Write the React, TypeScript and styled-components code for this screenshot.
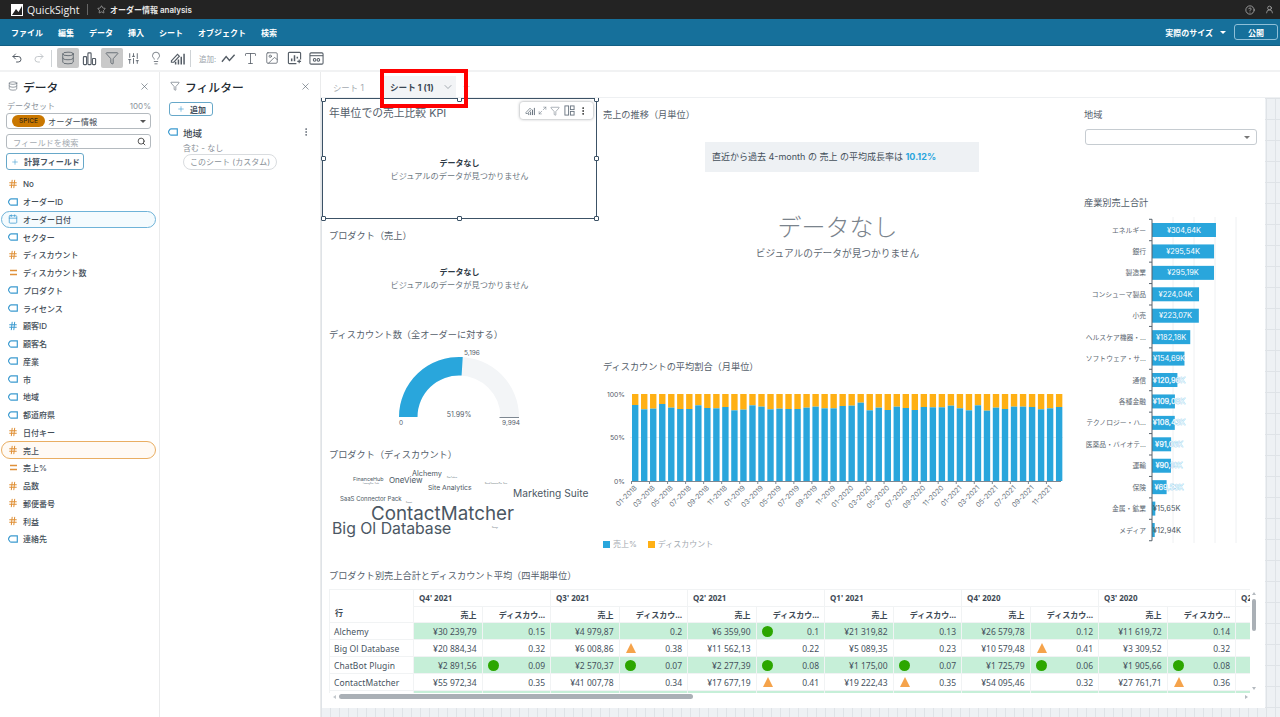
import React from "react";
import styled, { createGlobalStyle } from "styled-components";
import { Undo2, Redo2, Database, Filter, SlidersVertical, Lightbulb, Type, Image, X, Search, Star, CircleHelp, UserRound, ChevronDown, Maximize2, MoreVertical, Plus, Hash, Calendar } from "lucide-react";

const FONT = `Inter, "Noto Sans CJK JP", sans-serif`;
const TABLE_FONT = `"Noto Sans", "Noto Sans CJK JP", sans-serif`;

const Global = createGlobalStyle`
  html, body { margin: 0; padding: 0; background: #fff; }
  * { box-sizing: border-box; }
  body { font-family: ${FONT}; color: #3c4650; overflow: hidden; }
`;

const Page = styled.div`position: relative; width: 1280px; height: 717px; overflow: hidden; display: flex; flex-direction: column;`;
const TopBar = styled.header`height: 19px; background: #232323; color: #fff; display: flex; align-items: center; padding: 0 6px 0 11px;`;
const Logo = styled.svg`width: 12px; height: 12px; margin-right: 4px; flex: none;`;
const Brand = styled.span`font: 400 10.6px "Open Sans", sans-serif; color: #f0f0f0; width: 60px; flex: none;`;
const TopSep = styled.span`width: 1px; height: 11px; background: #666; margin-right: 9px; flex: none;`;
const AnalysisName = styled.span`font: 600 8px ${FONT}; color: #e8e8e8; margin-left: 4px; flex: 1;`;
const TopIcons = styled.div`display: flex; gap: 10px; color: #ccc; align-items: center;`;
const MenuBar = styled.nav`height: 27px; background: #16709b; display: flex; align-items: center; padding: 0 2px 0 11px; border-bottom: 1px solid #125f84; color: #fff; font: 700 8px ${FONT};`;
const MenuItems = styled.div`display: flex; gap: 15px; flex: 1;`;
const SizeLabel = styled.span`margin-right: 7px;`;
const CaretDown = styled.span<{ $c?: string; $w?: number }>`width: 0; height: 0; border-left: ${(p) => p.$w ?? 3}px solid transparent; border-right: ${(p) => p.$w ?? 3}px solid transparent; border-top: ${(p) => p.$w ?? 3}px solid ${(p) => p.$c ?? "#fff"}; flex: none;`;
const Publish = styled.button`margin-left: 8px; width: 44px; height: 16px; background: transparent; border: 1px solid #8fc0d8; border-radius: 3px; color: #fff; font: 700 8px ${FONT}; padding: 0;`;
const ToolBar = styled.div`height: 26px; background: #fff; border-bottom: 2px solid #f1f2f3; display: flex; align-items: center; padding-left: 6px; color: #555d66;`;
const ToolBtn = styled.span<{ $active?: boolean; $light?: boolean }>`width: 22px; height: 20px; display: flex; align-items: center; justify-content: center; flex: none; border-radius: 2px; color: ${(p) => (p.$light ? "#c4c8cc" : "#555d66")}; background: ${(p) => (p.$active ? "#c9c9c9" : "transparent")};`;
const ToolSep = styled.span<{ $r: number }>`width: 1px; height: 17px; background: #cfd3d6; margin: 0 ${(p) => p.$r}px 0 1px; flex: none;`;
const AddLabel = styled.span`font: 400 7.5px ${FONT}; color: #9aa2aa; white-space: nowrap; margin-right: 1px; width: 17px; margin-left: 1px; flex: none;`;
const Body = styled.div`flex: 1; display: flex; min-height: 0;`;
const Panel = styled.aside<{ $w: number }>`width: ${(p) => p.$w}px; flex: none; border-right: 1px solid #eaebec; background: #fff; position: relative;`;
const PanelHead = styled.div<{ $pl: number }>`height: 28px; display: flex; align-items: center; padding: 0 9px 0 ${(p) => p.$pl}px; gap: 5px;`;
const PanelTitle = styled.h2`margin: 0; font: 500 11.8px ${FONT}; color: #232b33; flex: 1;`;
const MetaRow = styled.div`display: flex; justify-content: space-between; padding: 1px 8px 0 7px; font: 400 8px/10px ${FONT}; color: #8b939b;`;
const Field = styled.div<{ $h: number }>`margin: 2px 8px 5px 6px; height: ${(p) => p.$h}px; border: 1px solid #b4babf; border-radius: 3px; display: flex; align-items: center; padding: 0 4px; gap: 3px; font: 400 8.2px ${FONT}; color: #444c54;`;
const Spice = styled.span`background: #c97700; color: #3a2a10; border-radius: 7px; width: 33px; height: 12px; font: 500 6.5px/12px ${FONT}; text-align: center; margin-left: 1px;`;
const Grow = styled.span`flex: 1;`;
const Placeholder = styled.span`flex: 1; color: #a5abb1; padding-left: 2px;`;
const OutlineBtn = styled.button<{ $w: number; $h: number; $pl: number }>`display: flex; align-items: center; gap: 5px; width: ${(p) => p.$w}px; height: ${(p) => p.$h}px; background: #fff; border: 1px solid #67a8c9; border-radius: 3px; padding: 0 0 0 ${(p) => p.$pl}px; font: 600 8px ${FONT}; color: #46525e;`;
const CalcWrap = styled.div`margin: -1px 0 5px 6px;`;
const FieldList = styled.ul`list-style: none; margin: 0; padding: 0 3px 0 1px;`;
const FieldRow = styled.li<{ $tone?: "blue" | "orange" }>`height: 17.75px; display: flex; align-items: center; gap: 5px; padding-left: 6px; font: 500 8px ${FONT}; color: #434d57; border-radius: 9px; border: 1px solid ${(p) => (p.$tone === "blue" ? "#6fb3d8" : p.$tone === "orange" ? "#e9ae62" : "transparent")}; background: ${(p) => (p.$tone === "blue" ? "#f4fbfe" : p.$tone === "orange" ? "#fffaf4" : "transparent")};`;
const FieldIconBox = styled.span<{ $c: string }>`width: 10px; height: 10px; color: ${(p) => p.$c}; display: flex; align-items: center; justify-content: center; flex: none;`;
const FilterBody = styled.div`padding: 2px 9px 0;`;
const FilterItem = styled.div`display: grid; grid-template-columns: 15px 1fr 10px; margin-top: 11px; color: #3f4953; margin-left: -1px;`;
const FilterName = styled.div`font: 500 9.5px/14px ${FONT};`;
const FilterMeta = styled.div`font: 400 8px/11px ${FONT}; color: #8a9198; margin-top: 2px;`;
const FilterPill = styled.div`width: fit-content; font: 400 8px/14px ${FONT}; color: #8a9198; border: 1px solid #d9dcdf; border-radius: 8px; padding: 0 6px; margin-top: 0; height: 16px; white-space: nowrap;`;
const Main = styled.main`flex: 1; min-width: 0; display: flex; flex-direction: column;`;
const TabBar = styled.div`height: 26px; display: flex; align-items: flex-end; padding-left: 5px; border-bottom: 1px solid #eef0f2;`;
const Tab = styled.div<{ $on?: boolean }>`height: 21px; display: flex; align-items: center; gap: 2px; white-space: nowrap; flex: none; color: ${(p) => (p.$on ? "#3a4652" : "#a4aab0")}; font: ${(p) => (p.$on ? 700 : 400)} ${(p) => (p.$on ? 8.6 : 8.4)}px ${FONT}; background: ${(p) => (p.$on ? "#f2f4f6" : "transparent")}; padding: 0 2px 0 7px; width: ${(p) => (p.$on ? 73 : 57)}px;`;
const TabPlus = styled.span`margin-left: 6px; height: 21px; color: #b2b7bc; display: flex; align-items: center;`;
const Scroll = styled.div`flex: 1; min-height: 0; background-color: #eef1f4; background-image: linear-gradient(#dfe3e7 1px, transparent 1px), linear-gradient(90deg, #dfe3e7 1px, transparent 1px); background-size: 9px 21px; overflow: hidden; padding-left: 1px;`;
const Sheet = styled.div`width: 943px; height: 610px; background: #fff; display: grid; grid-template-columns: 275px 481px 187px; grid-template-rows: 462px 148px;`;
const Col = styled.div`display: flex; flex-direction: column; min-width: 0;`;
const Visual = styled.section<{ $h: number }>`height: ${(p) => p.$h}px; position: relative; flex: none;`;
const VTitle = styled.h3<{ $top?: number; $size?: number; $left?: number }>`margin: 0; padding: ${(p) => p.$top ?? 0}px 0 0 ${(p) => p.$left ?? 7}px; font: 400 ${(p) => p.$size ?? 9.2}px/12px ${FONT}; color: #55606b;`;
const NoDataWrap = styled.div<{ $top: number }>`text-align: center; margin-top: ${(p) => p.$top}px;`;
const NoDataT = styled.div`font: 700 8px/12px ${FONT}; color: #2e3a45;`;
const NoDataS = styled.div`font: 400 8.2px/12px ${FONT}; color: #6b7680; margin-top: 1px;`;
const Selected = styled.div`position: absolute; inset: 0; border: 1.4px solid #3c5266; pointer-events: none;`;
const Handle = styled.span<{ $x: number; $y: number }>`position: absolute; left: ${(p) => p.$x}%; top: ${(p) => p.$y}%; width: 5px; height: 5px; margin: -2.5px 0 0 -2.5px; background: #fff; border: 1px solid #3c5266; border-radius: 1px;`;
const FloatBar = styled.div`position: absolute; right: 4px; top: 4px; width: 73px; height: 17px; background: #fff; border-radius: 3px; box-shadow: 0 0 3px rgba(30,40,50,.5); display: flex; align-items: center; justify-content: space-around; padding: 0 3px; color: #6a7580;`;
const Insight = styled.div`margin: 21px 0 0 108px; width: 274px; height: 30px; background: #eef1f4; font: 400 9px/30px ${FONT}; color: #45505b; padding-left: 7px; white-space: nowrap;`;
const InsightValue = styled.b`color: #2aa5dd; font-weight: 700;`;
const BigEmpty = styled.div`text-align: center; margin: 41px 0 0 0; width: 481px;`;
const BigT = styled.div`font: 300 24px/30px ${FONT}; color: #7a838c;`;
const BigS = styled.div`font: 400 9.7px/14px ${FONT}; color: #5f6973; margin-top: 4px;`;
const Legend = styled.div`display: flex; align-items: center; margin: 8px 0 0 6px; font: 400 8px/10px ${FONT}; color: #a3a9af;`;
const Swatch = styled.span<{ $c: string }>`width: 7px; height: 7px; background: ${(p) => p.$c}; margin-right: 3px;`;
const LegendGap = styled.span`width: 11px;`;
const Dropdown = styled.div`margin: 8px 8px 0 7px; height: 16px; border: 1px solid #c6ccd1; border-radius: 3px; display: flex; align-items: center; justify-content: flex-end; padding-right: 6px;`;
const TableSection = styled.section`grid-column: 1 / -1; position: relative; padding-top: 10px;`;
const TableClip = styled.div`margin: 7px 0 0 7px; width: 921px; height: 104px; overflow: hidden;`;
const Grid = styled.table`border-collapse: collapse; table-layout: fixed; width: 974px; font: 400 8.5px/15px ${TABLE_FONT}; color: #46525e;`;
const ColW = styled.col<{ $w: number }>`width: ${(p) => p.$w}px;`;
const Th = styled.th<{ $left?: boolean }>`height: 16.5px; padding: 0 5px; font-weight: 700; font-size: 8px; text-align: ${(p) => (p.$left ? "left" : "right")}; border: 1px solid #f1f3f4; white-space: nowrap; overflow: hidden; color: #3e4a55; background: #fff;`;
const CornerTh = styled(Th)`vertical-align: bottom; padding-bottom: 2px;`;
const Td = styled.td<{ $g?: boolean }>`height: 17px; padding: 0 5px 0 4px; position: relative; text-align: right; border: 1px solid #f1f3f4; background: ${(p) => (p.$g ? "#c6efd8" : "#fff")}; white-space: nowrap;`;
const RowHead = styled(Td)`text-align: left; background: #fff; letter-spacing: .1px;`;
const Dot = styled.span`position: absolute; left: 5px; top: 3px; width: 11px; height: 11px; border-radius: 50%; background: #2ca600;`;
const Tri = styled.span`position: absolute; left: 6px; top: 3px; width: 0; height: 0; border-left: 5px solid transparent; border-right: 5px solid transparent; border-bottom: 10px solid #f5a34b;`;
const HBar = styled.div`position: absolute; left: 17px; top: 134px; width: 354px; height: 5px; border-radius: 3px; background: #aab0b6;`;
const VBar = styled.div`position: absolute; left: 930px; top: 39px; width: 4px; height: 32px; border-radius: 2px; background: #aab0b6;`;
const ArrowUp = styled.span`position: absolute; left: 930px; top: 32px; width: 0; height: 0; border-left: 2.5px solid transparent; border-right: 2.5px solid transparent; border-bottom: 3px solid #b4babf;`;
const ArrowDown = styled.span`position: absolute; left: 930px; top: 127px; width: 0; height: 0; border-left: 2.5px solid transparent; border-right: 2.5px solid transparent; border-top: 3px solid #b4babf;`;
const ArrowLeft = styled.span`position: absolute; left: 11px; top: 135px; width: 0; height: 0; border-top: 2.5px solid transparent; border-bottom: 2.5px solid transparent; border-right: 3px solid #c4c9cd;`;
const ArrowRight = styled.span`position: absolute; left: 923px; top: 135px; width: 0; height: 0; border-top: 2.5px solid transparent; border-bottom: 2.5px solid transparent; border-left: 3px solid #b4babf;`;
const RedMark = styled.div`position: absolute; left: 380px; top: 69px; width: 88px; height: 39px; border: 4px solid #f00;`;
const SvgText = styled.text<{ $s: number; $c?: string }>`font-family: ${FONT}; font-size: ${(p) => p.$s}px; fill: ${(p) => p.$c ?? "#55606b"};`;
const ChartSvg = styled.svg`display: block;`;
const Spacer = styled.div`height: 3px;`;

const Tag = ({ c = "#3d9bd0", s = 10 }: { c?: string; s?: number }) => (
  <svg width={s} height={s * 0.8} viewBox="0 0 10 8" fill="none" stroke={c} strokeWidth="1.2"><path d="M9.3 .8H3.2C2.6.8 2.2 1 1.9 1.4L.9 2.9c-.3.5-.3 1.6 0 2.1l1 1.5c.3.4.7.7 1.3.7h6.1z" /></svg>
);
const Eq = () => <svg width="9" height="7" viewBox="0 0 9 7" stroke="#e0913a" strokeWidth="1.4"><path d="M1 1.5H8M1 5.5H8" /></svg>;
const fieldIcon = (k: string) => {
  if (k === "t") return <FieldIconBox $c="#3d9bd0"><Tag /></FieldIconBox>;
  if (k === "h") return <FieldIconBox $c="#df8f35"><Hash size={10} strokeWidth={2.4} /></FieldIconBox>;
  if (k === "b") return <FieldIconBox $c="#3d9bd0"><Hash size={10} strokeWidth={2.4} /></FieldIconBox>;
  if (k === "e") return <FieldIconBox $c="#df8f35"><Eq /></FieldIconBox>;
  return <FieldIconBox $c="#3d9bd0"><Calendar size={10} strokeWidth={1.8} /></FieldIconBox>;
};
const fields: [string, string, ("blue" | "orange")?][] = [
  ["h", "No"], ["t", "オーダーID"], ["c", "オーダー日付", "blue"], ["t", "セクター"], ["h", "ディスカウント"], ["e", "ディスカウント数"], ["t", "プロダクト"], ["t", "ライセンス"], ["b", "顧客ID"], ["t", "顧客名"], ["t", "産業"], ["t", "市"], ["t", "地域"], ["t", "都道府県"], ["h", "日付キー"], ["h", "売上", "orange"], ["e", "売上%"], ["h", "品数"], ["h", "郵便番号"], ["h", "利益"], ["t", "連絡先"],
];

const BarsIcon = ({ s = 15 }: { s?: number }) => (
  <svg width={s} height={s} viewBox="0 0 16 16" fill="none" stroke="currentColor" strokeWidth="1.2"><rect x="1.5" y="6" width="3.4" height="8.5" rx=".8" /><rect x="6.3" y="2" width="3.4" height="12.5" rx=".8" /><rect x="11.1" y="8" width="3.4" height="6.5" rx=".8" /></svg>
);
const InsightIcon = ({ s = 15 }: { s?: number }) => (
  <svg width={s} height={s} viewBox="0 0 16 16" fill="none" stroke="currentColor" strokeWidth="1.2"><path d="M1.5 10.5 8 3.5l2 2-6 6.5H1.5z" /><path d="M6 14.5v-3M9 14.5V9M12 14.5V6M15 14.5V3" strokeWidth="1.6" /></svg>
);
const LineIcon = () => <svg width="15" height="15" viewBox="0 0 16 16" fill="none" stroke="currentColor" strokeWidth="1.5"><path d="M1 11.5 5.5 6l3.5 4 5.5-6" /></svg>;
const PicChart = () => (
  <svg width="15" height="15" viewBox="0 0 16 16" fill="none" stroke="currentColor" strokeWidth="1.2"><path d="M10 13.5H2.5a1 1 0 0 1-1-1v-10a1 1 0 0 1 1-1h11a1 1 0 0 1 1 1V9" /><path d="M5 11V8M8 11V4.5M11 8V6" strokeWidth="1.6" /><path d="M11 11h4M13 9v4" /></svg>
);
const EmbedIcon = () => (
  <svg width="15" height="15" viewBox="0 0 16 16" fill="none" stroke="currentColor" strokeWidth="1.1"><rect x="1" y="2" width="14" height="12" rx="1.2" /><path d="M1 5h14" /><circle cx="6" cy="9.5" r="1.4" /><circle cx="10" cy="9.5" r="1.4" /></svg>
);
const LayoutIcon = () => (
  <svg width="11" height="11" viewBox="0 0 12 12" fill="none" stroke="currentColor" strokeWidth="1"><rect x="1" y="1" width="4" height="10" /><rect x="7" y="1" width="4" height="4" /><rect x="7" y="7" width="4" height="4" /></svg>
);

const blueTops = [150,163,161,147,158,162,162,151,159,160,156,166,164,151,155,163,161,162,162,158,155,160,160,153,152,143,166,158,165,155].map((v) => (v - 117) / 3).concat([84,90,81,82,82,77,85,91,76,92,83,87,80,80,81,88,85,81].map((v) => (v - 42) / 3));
const TOP = 18; const BASE = 105; const X0 = 35; const PITCH = 9.02;

const StackedChart = () => {
  const labels: string[] = [];
  for (let y = 2018; y <= 2021; y++) for (let m = 1; m <= 11; m += 2) labels.push(`${String(m).padStart(2, "0")}-${y}`);
  return (
    <ChartSvg width={481} height={155}>
      <line x1={X0 - 2} x2={466} y1={TOP + 43.5} y2={TOP + 43.5} stroke="#eceef0" strokeWidth="1" />
      <SvgText $s={6.8} x={28} y={TOP + 2.5} textAnchor="end">100%</SvgText>
      <SvgText $s={6.8} x={28} y={TOP + 46} textAnchor="end">50%</SvgText>
      <SvgText $s={6.8} x={28} y={BASE + 2.5} textAnchor="end">0%</SvgText>
      {blueTops.map((t, i) => (
        <g key={i}>
          <rect x={X0 + i * PITCH} y={TOP} width={6.4} height={t} fill="#ffb014" />
          <rect x={X0 + i * PITCH} y={TOP + t} width={6.4} height={BASE - TOP - t} fill="#29a6dc" />
        </g>
      ))}
      <line x1={X0 - 1} x2={464} y1={BASE + .5} y2={BASE + .5} stroke="#7d8791" strokeWidth="1" />
      {labels.map((l, i) => {
        const x = X0 + 3 + i * 2 * PITCH;
        return (
          <g key={l}>
            <line x1={x - 3.5} x2={x - 3.5} y1={BASE} y2={BASE + 3} stroke="#7d8791" />
            <SvgText $s={7} $c="#6a747e" transform={`translate(${x + 1} ${BASE + 6}) rotate(-45)`} textAnchor="end" dominantBaseline="middle">{l}</SvgText>
          </g>
        );
      })}
    </ChartSvg>
  );
};

const industries: [string, string, number][] = [
  ["エネルギー", "¥304,64K", 304.64], ["銀行", "¥295,54K", 295.54], ["製造業", "¥295,19K", 295.19], ["コンシューマ製品", "¥224,04K", 224.04], ["小売", "¥223,07K", 223.07], ["ヘルスケア機器・…", "¥182,18K", 182.18], ["ソフトウェア・サ…", "¥154,69K", 154.69], ["通信", "¥120,96K", 120.96], ["各種金融", "¥109,08K", 109.08], ["テクノロジー・ハ…", "¥108,43K", 108.43], ["医薬品・バイオテ…", "¥91,06K", 91.06], ["運輸", "¥90,19K", 90.19], ["保険", "¥69,53K", 69.53], ["金属・鉱業", "¥15,65K", 15.65], ["メディア", "¥12,94K", 12.94],
];
const HorizontalChart = () => {
  const base = 74; const y0 = 21; const p = 21.43; const k = 0.21;
  return (
    <ChartSvg width={187} height={340}>
      {[1, 2, 3, 4].map((i) => <line key={i} x1={base + i * 21} x2={base + i * 21} y1={8} y2={334} stroke="#eef0f2" />)}
      {industries.map(([n, v, w], i) => {
        const cy = y0 + i * p; const bw = w * k; const small = bw < 10;
        return (
          <g key={n}>
            <SvgText $s={6.8} $c="#5d6872" x={base - 6} y={cy + 2.5} textAnchor="end">{n}</SvgText>
            <rect x={base} y={cy - 7} width={bw} height={14} fill="#29a6dc" />
            {small ? (
              <SvgText $s={7.4} $c="#4a5560" x={base + 1} y={cy + 2.5}>{v}</SvgText>
            ) : (
              <SvgText $s={7.4} $c="#fff" x={Math.max(base + bw / 2, base + 17)} y={cy + 2.5} textAnchor="middle" stroke={bw < 30 ? "#7cc8ec" : "none"} strokeWidth=".6" paintOrder="stroke">{v}</SvgText>
            )}
            <line x1={base - 3} x2={base} y1={cy + p / 2} y2={cy + p / 2} stroke="#56616b" />
          </g>
        );
      })}
      <line x1={base - 3} x2={base} y1={y0 - p / 2} y2={y0 - p / 2} stroke="#56616b" />
      <line x1={base} x2={base} y1={y0 - p / 2} y2={y0 + 14.5 * p} stroke="#56616b" />
    </ChartSvg>
  );
};

const Gauge = () => {
  const cx = 137; const cy = 76; const R = 60; const r = 41.5;
  const a = Math.PI * (1 - 0.5199);
  const px = (rad: number) => `${cx + rad * Math.cos(a)} ${cy - rad * Math.sin(a)}`;
  return (
    <ChartSvg width={275} height={90}>
      <path d={`M${cx - R} ${cy}A${R} ${R} 0 0 1 ${cx + R} ${cy}H${cx + r}A${r} ${r} 0 0 0 ${cx - r} ${cy}Z`} fill="#f3f5f7" />
      <path d={`M${cx - R} ${cy}A${R} ${R} 0 0 1 ${px(R)}L${px(r)}A${r} ${r} 0 0 0 ${cx - r} ${cy}Z`} fill="#29a6dc" />
      <line x1={cx + r - 1} x2={cx + R} y1={cy + .5} y2={cy + .5} stroke="#7d8791" strokeWidth="1" />
      <SvgText $s={6.5} x={150} y={14} textAnchor="middle">5,196</SvgText>
      <SvgText $s={6.5} x={79} y={84} textAnchor="middle">0</SvgText>
      <SvgText $s={6.5} x={189} y={84} textAnchor="middle">9,994</SvgText>
      <SvgText $s={7} x={137} y={76} textAnchor="middle">51.99%</SvgText>
    </ChartSvg>
  );
};

const words: [string, number, number, number][] = [
  ["FinanceHub", 31, 19.5, 5.4], ["OneView", 67, 22, 8], ["Alchemy", 90, 14.5, 7.3], ["Site Analytics", 106, 29, 6.8], ["Marketing Suite", 191, 36, 10.2], ["SaaS Connector Pack", 18, 40, 6], ["ContactMatcher", 49, 59, 18.8], ["Big Ol Database", 10, 73, 15.8], ["Learning Quiz · Code", 41, 23, 1.6], ["Data Explorer", 125, 17, 1.6], ["Neural Connector Plus · Suite", 163, 23, 1.6], ["Support", 84, 42, 1.6], ["Insight Hub", 117, 69, 1.6], ["Storage", 170, 67, 1.6],
];
const WordCloud = () => (
  <ChartSvg width={275} height={85}>
    {words.map(([w, x, y, s]) => <SvgText key={w} $s={s} $c="#4b5763" x={x} y={y}>{w}</SvgText>)}
  </ChartSvg>
);

type Cell = [string, string, ("d" | "t")?];
const rows: { n: string; g: boolean; c: Cell[] }[] = [
  { n: "Alchemy", g: true, c: [["¥30 239,79", "0.15"], ["¥4 979,87", "0.2"], ["¥6 359,90", "0.1", "d"], ["¥21 319,82", "0.13"], ["¥26 579,78", "0.12"], ["¥11 619,72", "0.14"]] },
  { n: "Big Ol Database", g: false, c: [["¥20 884,34", "0.32"], ["¥6 008,86", "0.38", "t"], ["¥11 562,13", "0.22"], ["¥5 089,35", "0.23"], ["¥10 579,48", "0.41", "t"], ["¥3 309,52", "0.32"]] },
  { n: "ChatBot Plugin", g: true, c: [["¥2 891,56", "0.09", "d"], ["¥2 570,37", "0.07", "d"], ["¥2 277,39", "0.08", "d"], ["¥1 175,00", "0.07", "d"], ["¥1 725,79", "0.06", "d"], ["¥1 905,66", "0.08", "d"]] },
  { n: "ContactMatcher", g: false, c: [["¥55 972,34", "0.35"], ["¥41 007,78", "0.34"], ["¥17 677,19", "0.41", "t"], ["¥19 222,43", "0.35", "t"], ["¥54 095,46", "0.32"], ["¥27 761,71", "0.36", "t"]] },
  { n: "\u00a0", g: true, c: [["", ""], ["", ""], ["", ""], ["", ""], ["", ""], ["", ""]] },
];
const quarters = ["Q4' 2021", "Q3' 2021", "Q2' 2021", "Q1' 2021", "Q4' 2020", "Q3' 2020"];

const DataTable = () => (
  <Grid>
    <colgroup>
      <ColW $w={84} />
      {quarters.flatMap((q) => [<ColW key={q + "a"} $w={68.5} />, <ColW key={q + "b"} $w={68.5} />])}
      <ColW $w={68} />
    </colgroup>
    <thead>
      <tr>
        <CornerTh $left rowSpan={2}>行</CornerTh>
        {quarters.map((q) => <Th $left key={q} colSpan={2}>{q}</Th>)}
        <Th $left>Q2' 2020</Th>
      </tr>
      <tr>
        {quarters.flatMap((q) => [<Th key={q + "s"}>売上</Th>, <Th key={q + "d"}>ディスカウ…</Th>])}
        <Th />
      </tr>
    </thead>
    <tbody>
      {rows.map((r) => (
        <tr key={r.n}>
          <RowHead>{r.n}</RowHead>
          {r.c.flatMap((c, i) => [
            <Td $g={r.g} key={i + "s"}>{c[0]}</Td>,
            <Td $g={r.g} key={i + "d"}>{c[2] === "d" && <Dot />}{c[2] === "t" && <Tri />}{c[1]}</Td>,
          ])}
          <Td $g={r.g} />
        </tr>
      ))}
    </tbody>
  </Grid>
);

const handles = [[0, 0], [50, 0], [100, 0], [0, 50], [100, 50], [0, 100], [50, 100], [100, 100]];

export default function App() {
  return (
    <Page>
      <Global />
      <TopBar>
        <Logo viewBox="0 0 12 12"><rect width="12" height="12" fill="#fff" /><path d="M1 11 5 5l2.5 3L11 2v9z" fill="#232323" /></Logo>
        <Brand>QuickSight</Brand>
        <TopSep />
        <Star size={9} color="#ddd" strokeWidth={1.4} />
        <AnalysisName>オーダー情報 analysis</AnalysisName>
        <TopIcons>
          <CircleHelp size={10} strokeWidth={1.6} />
          <UserRound size={9} strokeWidth={1.6} />
        </TopIcons>
      </TopBar>
      <MenuBar>
        <MenuItems>
          {["ファイル", "編集", "データ", "挿入", "シート", "オブジェクト", "検索"].map((m) => <span key={m}>{m}</span>)}
        </MenuItems>
        <SizeLabel>実際のサイズ</SizeLabel>
        <CaretDown $w={3.2} />
        <Publish>公開</Publish>
      </MenuBar>
      <ToolBar>
        <ToolBtn><Undo2 size={12} /></ToolBtn>
        <ToolBtn $light><Redo2 size={12} /></ToolBtn>
        <ToolSep $r={4.5} />
        <ToolBtn $active><Database size={14} strokeWidth={1.4} /></ToolBtn>
        <ToolBtn><BarsIcon /></ToolBtn>
        <ToolBtn $active><Filter size={14} strokeWidth={1.4} /></ToolBtn>
        <ToolBtn><SlidersVertical size={13} strokeWidth={1.6} /></ToolBtn>
        <ToolBtn><Lightbulb size={14} strokeWidth={1.3} /></ToolBtn>
        <ToolBtn><InsightIcon /></ToolBtn>
        <ToolSep $r={7.5} />
        <AddLabel>追加:</AddLabel>
        <ToolBtn><LineIcon /></ToolBtn>
        <ToolBtn><Type size={15} strokeWidth={1.3} /></ToolBtn>
        <ToolBtn><Image size={14} strokeWidth={1.3} /></ToolBtn>
        <ToolBtn><PicChart /></ToolBtn>
        <ToolBtn><EmbedIcon /></ToolBtn>
      </ToolBar>
      <Body>
        <Panel $w={160}>
          <PanelHead $pl={8}>
            <Database size={10} strokeWidth={1.5} color="#5b6570" />
            <PanelTitle>データ</PanelTitle>
            <X size={11} color="#5b6570" strokeWidth={1.4} />
          </PanelHead>
          <MetaRow><span>データセット</span><span>100%</span></MetaRow>
          <Field $h={16}>
            <Spice>SPICE</Spice>
            <span>オーダー情報</span>
            <Grow />
            <CaretDown $c="#555" $w={3} />
          </Field>
          <Field $h={15}>
            <Placeholder>フィールドを検索</Placeholder>
            <Search size={9} color="#333" strokeWidth={2.2} />
          </Field>
          <CalcWrap>
            <OutlineBtn $w={78} $h={17} $pl={4}><Plus size={8} color="#3d9bd0" strokeWidth={1.8} />計算フィールド</OutlineBtn>
          </CalcWrap>
          <FieldList>
            {fields.map(([k, n, t]) => <FieldRow key={n} $tone={t}>{fieldIcon(k)}<span>{n}</span></FieldRow>)}
          </FieldList>
        </Panel>
        <Panel $w={161}>
          <PanelHead $pl={10}>
            <Filter size={10} strokeWidth={1.5} color="#5b6570" />
            <PanelTitle>フィルター</PanelTitle>
            <X size={11} color="#5b6570" strokeWidth={1.4} />
          </PanelHead>
          <FilterBody>
            <OutlineBtn $w={44} $h={14} $pl={7}><Plus size={8} color="#3d9bd0" strokeWidth={1.8} />追加</OutlineBtn>
            <FilterItem>
              <FieldIconBox $c="#3d9bd0"><Tag /></FieldIconBox>
              <div>
                <FilterName>地域</FilterName>
                <FilterMeta>含む - なし</FilterMeta>
                <FilterPill>このシート (カスタム)</FilterPill>
              </div>
              <MoreVertical size={10} color="#5b6570" />
            </FilterItem>
          </FilterBody>
        </Panel>
        <Main>
          <TabBar>
            <Tab>シート 1</Tab>
            <Tab $on>シート 1 (1)<Grow /><ChevronDown size={12} color="#6f7982" strokeWidth={1.2} /></Tab>
            <TabPlus><Plus size={9} strokeWidth={1.3} /></TabPlus>
          </TabBar>
          <Scroll>
            <Sheet>
              <Col>
                <Visual $h={121}>
                  <VTitle $top={10} $size={10.8}>年単位での売上比較 KPI</VTitle>
                  <NoDataWrap $top={37}>
                    <NoDataT>データなし</NoDataT>
                    <NoDataS>ビジュアルのデータが見つかりません</NoDataS>
                  </NoDataWrap>
                  <Selected>
                    {handles.map(([x, y]) => <Handle key={`${x}-${y}`} $x={x} $y={y} />)}
                  </Selected>
                  <FloatBar>
                    <InsightIcon s={10} />
                    <Maximize2 size={9} strokeWidth={1.4} />
                    <Filter size={10} strokeWidth={1.3} />
                    <LayoutIcon />
                    <MoreVertical size={10} color="#222" />
                  </FloatBar>
                </Visual>
                <Visual $h={106}>
                  <VTitle $top={11}>プロダクト（売上）</VTitle>
                  <NoDataWrap $top={24}>
                    <NoDataT>データなし</NoDataT>
                    <NoDataS>ビジュアルのデータが見つかりません</NoDataS>
                  </NoDataWrap>
                </Visual>
                <Visual $h={120}>
                  <VTitle $top={4}>ディスカウント数（全オーダーに対する）</VTitle>
                  <Gauge />
                </Visual>
                <Visual $h={115}>
                  <VTitle $top={4}>プロダクト（ディスカウント）</VTitle>
                  <WordCloud />
                </Visual>
              </Col>
              <Col>
                <Visual $h={257}>
                  <VTitle $top={11} $left={6}>売上の推移（月単位）</VTitle>
                  <Insight>直近から過去 4-month の 売上 の平均成長率は <InsightValue>10.12%</InsightValue></Insight>
                  <BigEmpty>
                    <BigT>データなし</BigT>
                    <BigS>ビジュアルのデータが見つかりません</BigS>
                  </BigEmpty>
                </Visual>
                <Visual $h={205}>
                  <VTitle $top={6} $left={6}>ディスカウントの平均割合（月単位）</VTitle>
                  <Spacer />
                  <StackedChart />
                  <Legend>
                    <Swatch $c="#29a6dc" />売上%<LegendGap />
                    <Swatch $c="#ffb014" />ディスカウント
                  </Legend>
                </Visual>
              </Col>
              <Col>
                <Visual $h={99}>
                  <VTitle $top={11} $left={6}>地域</VTitle>
                  <Dropdown><CaretDown $c="#777" $w={3} /></Dropdown>
                </Visual>
                <VTitle $left={6}>産業別売上合計</VTitle>
                <HorizontalChart />
              </Col>
              <TableSection>
                <VTitle>プロダクト別売上合計とディスカウント平均（四半期単位）</VTitle>
                <TableClip><DataTable /></TableClip>
                <ArrowLeft /><HBar /><ArrowRight />
                <ArrowUp /><VBar /><ArrowDown />
              </TableSection>
            </Sheet>
          </Scroll>
        </Main>
      </Body>
      <RedMark />
    </Page>
  );
}
